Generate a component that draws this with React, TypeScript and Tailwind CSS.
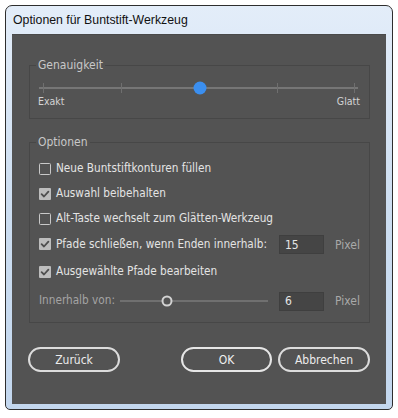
import React from "react";

const FONT = { fontFamily: '"Liberation Sans", Arial, sans-serif' };
const BODY = { fontFamily: '"DejaVu Sans Condensed", "Liberation Sans", sans-serif' };

function CheckBox({ checked }: { checked: boolean }) {
  if (checked) {
    return (
      <svg width="12" height="12" viewBox="0 0 12 12" className="shrink-0">
        <rect x="0" y="0" width="12" height="12" rx="1" fill="#bdbdbd" />
        <path d="M2.6 6.2 L5 8.5 L9.4 3.6" fill="none" stroke="#4f4f4f" strokeWidth="1.8" strokeLinecap="round" strokeLinejoin="round" />
      </svg>
    );
  }
  return (
    <svg width="12" height="12" viewBox="0 0 12 12" className="shrink-0">
      <rect x="0.5" y="0.5" width="11" height="11" rx="1" fill="none" stroke="#c9c9c9" strokeWidth="1" />
    </svg>
  );
}

function Row({ checked, label, h }: { checked: boolean; label: string; h: string }) {
  return (
    <div className={`flex items-center gap-[5px] ${h}`}>
      <CheckBox checked={checked} />
      <span className="text-[11.7px] text-[#e4e4e4] whitespace-nowrap">{label}</span>
    </div>
  );
}

function NumField({ value }: { value: string }) {
  return (
    <div className="w-[45px] h-[19px] bg-[#454545] border border-[#3f3f3f] flex items-center pl-[5px] text-[12px] text-[#e6e6e6]">
      {value}
    </div>
  );
}

export default function App() {
  const ticks = [4, 82, 238, 315];
  return (
    <div className="w-[398px] h-[418px] bg-white p-[5px]" style={FONT}>
      <div className="w-[388px] h-[405px] rounded-t-[7px] rounded-b-[5px] border border-[#2e2e2e] bg-gradient-to-b from-[#e3edf9] via-[#cddef1] to-[#c3d7ee] flex flex-col">
        <div className="h-[28px] flex items-center pl-[7px] text-[12.3px] text-[#111]">
          Optionen für Buntstift-Werkzeug
        </div>
        <div className="mx-[6px] mb-[5px] flex-1 bg-[#535353] flex flex-col border-t border-[#4a4a4a]" style={BODY}>
          {/* Genauigkeit */}
          <fieldset className="mt-[23px] ml-[17px] mr-[16px] border border-[#474747] pl-[9px] pr-[9px] pb-[11px]">
            <legend className="-ml-[3px] px-[2px] text-[12px] leading-[14px] text-[#c8c8c8]">Genauigkeit</legend>
            <svg width="321" height="14" viewBox="0 0 321 14" className="mt-[9px] block">
              <line x1="0" y1="7" x2="319" y2="7" stroke="#767676" strokeWidth="2" />
              {ticks.map((t) => (
                <line key={t} x1={t + 0.5} y1="2" x2={t + 0.5} y2="12" stroke="#6f6f6f" strokeWidth="1" />
              ))}
              <circle cx="161" cy="7" r="6.5" fill="#3b8ff0" />
            </svg>
            <div className="flex justify-between -ml-[1px] text-[10.5px] leading-[12px] text-[#d4d4d4]">
              <span>Exakt</span>
              <span>Glatt</span>
            </div>
          </fieldset>

          {/* Optionen */}
          <fieldset className="mt-[16px] ml-[17px] mr-[17px] border border-[#474747] pl-[9px] pr-[9px] pt-[7px] pb-[7px]">
            <legend className="-ml-[3px] px-[2px] text-[12px] leading-[14px] text-[#c8c8c8]">Optionen</legend>
            <Row checked={false} label="Neue Buntstiftkonturen füllen" h="h-[25px]" />
            <Row checked={true} label="Auswahl beibehalten" h="h-[25px]" />
            <Row checked={false} label="Alt-Taste wechselt zum Glätten-Werkzeug" h="h-[25px]" />
            <div className="flex items-center h-[27px]">
              <div className="w-[240px] flex items-center gap-[5px]">
                <CheckBox checked={true} />
                <span className="text-[11.7px] text-[#e4e4e4] whitespace-nowrap">Pfade schließen, wenn Enden innerhalb:</span>
              </div>
              <NumField value="15" />
              <span className="ml-[11px] text-[12px] text-[#a9a9a9]">Pixel</span>
            </div>
            <Row checked={true} label="Ausgewählte Pfade bearbeiten" h="h-[27px]" />
            <div className="flex items-center h-[30px] pt-[2px]">
              <span className="w-[81px] text-[11.7px] text-[#a4a4a4] whitespace-nowrap">Innerhalb von:</span>
              <svg width="148" height="14" viewBox="0 0 148 14" className="block">
                <line x1="0" y1="7" x2="148" y2="7" stroke="#8e8e8e" strokeWidth="1.2" />
                <circle cx="47" cy="7" r="4.5" fill="#535353" stroke="#d2d2d2" strokeWidth="2" />
              </svg>
              <div className="ml-[11px]">
                <NumField value="6" />
              </div>
              <span className="ml-[11px] text-[12px] text-[#a9a9a9]">Pixel</span>
            </div>
          </fieldset>

          {/* Buttons */}
          <div className="mt-[24px] flex items-center pl-[16px] pr-[16px]">
            <button className="w-[92px] h-[25px] rounded-full border-2 border-[#dcdcdc] text-[12px] text-[#ececec]">Zurück</button>
            <div className="flex-1" />
            <button className="w-[91px] h-[25px] rounded-full border-2 border-[#e6e6e6] text-[12px] text-[#f0f0f0]">OK</button>
            <button className="ml-[6px] w-[92px] h-[25px] rounded-full border-2 border-[#dcdcdc] text-[12px] text-[#ececec]">Abbrechen</button>
          </div>
        </div>
      </div>
    </div>
  );
}
